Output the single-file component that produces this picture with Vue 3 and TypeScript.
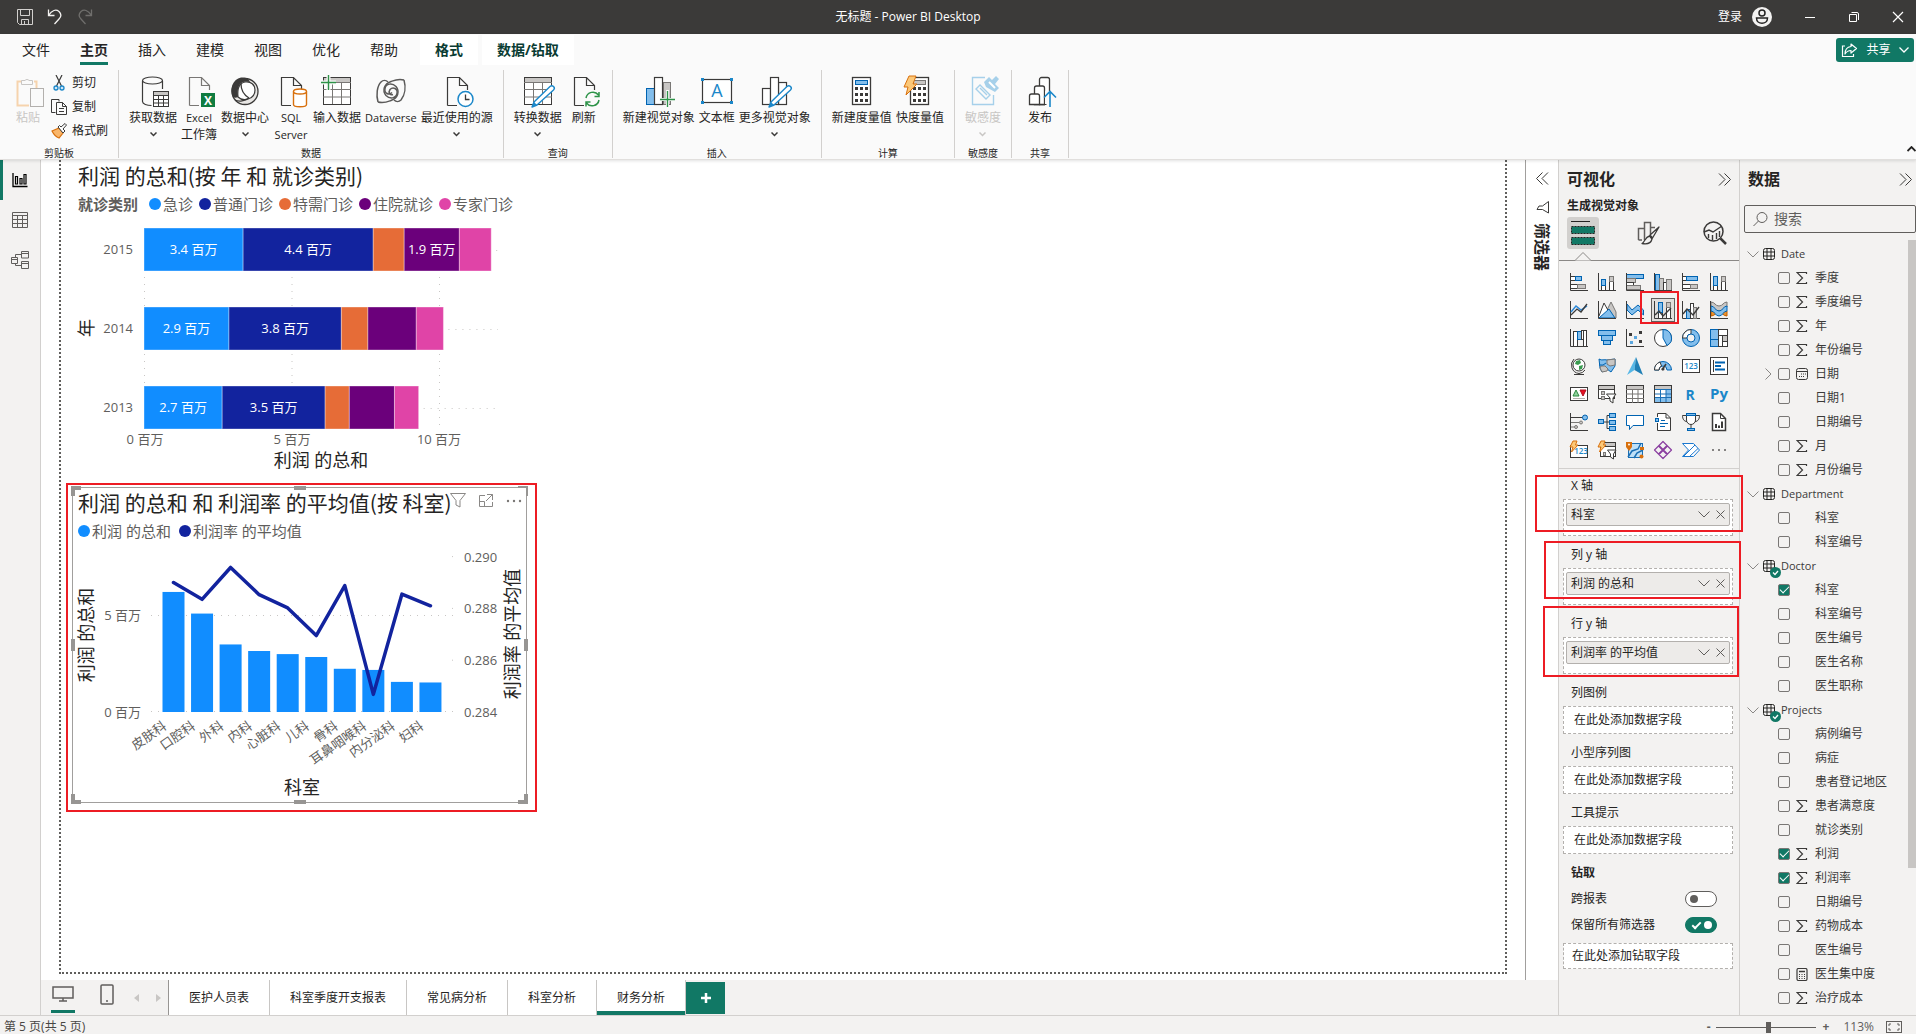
<script setup lang="ts">
import { computed, ref } from 'vue'

const D = '#3b3a39'
const B = '#0063b1'
const L = '#83beec'
const G = '#c8c6c4'
const axis = `<path d="M.5 0V17.5H18" fill="none" stroke="${D}"/>`
const box = (x: number, y: number, w: number, h: number, f: string, s: string) =>
  `<rect x="${x + 0.5}" y="${y + 0.5}" width="${w - 1}" height="${h - 1}" fill="${f}" stroke="${s}"/>`
const line = (d: string, s = D, w = 1, f = 'none') => `<path d="${d}" fill="${f}" stroke="${s}" stroke-width="${w}"/>`
const bolt = (s: string) => `<path d="${s}" fill="#fcc878" stroke="#d8700d" stroke-linejoin="round"/>`

/* Glyphs of the visual gallery, drawn on an 18 x 18 grid */
const visuals: { name: string; art: string }[] = [
  { name: '堆积条形图', art: axis + box(0, 3, 6, 5, '#fff', D) + box(5, 3, 7, 5, L, B) + box(0, 11, 8, 5, '#fff', D) + box(7, 11, 9, 5, G, '#797775') },
  { name: '堆积柱形图', art: axis + box(3, 12, 5, 6, '#fff', D) + box(3, 6, 5, 7, L, B) + box(11, 8, 5, 10, '#fff', D) + box(11, 3, 5, 6, G, '#797775') },
  { name: '簇状条形图', art: box(0, 1, 18, 5, L, B) + box(0, 5, 10, 5, G, '#797775') + box(0, 9, 8, 4, '#fff', D) + box(0, 12, 15, 5, G, '#797775') + axis },
  { name: '簇状柱形图', art: box(1, 1, 5, 17, L, B) + box(5, 5, 5, 13, G, '#797775') + box(9, 9, 4, 9, '#fff', D) + box(12, 6, 6, 12, G, '#797775') + axis },
  { name: '百分比堆积条形图', art: axis + box(0, 3, 5, 5, '#fff', D) + box(4, 3, 12, 5, L, B) + box(0, 11, 9, 5, '#fff', D) + box(8, 11, 8, 5, G, '#797775') },
  { name: '百分比堆积柱形图', art: axis + box(3, 12, 5, 6, '#fff', D) + box(3, 3, 5, 10, L, B) + box(11, 8, 5, 10, '#fff', D) + box(11, 3, 5, 6, G, '#797775') },
  { name: '折线图', art: axis + line('M1 11L6 5L11 9L17 5', '#2b88d8', 1.5) + line('M1 14L7 8L11 11L17 3', D, 1.3) },
  { name: '分区图', art: `<path d="M5 17L13 1L18 11V17Z" fill="${G}" stroke="#797775"/><path d="M1 15L6 2L12 13" fill="#fff" stroke="${D}"/><path d="M1 17L11 8L17 17Z" fill="${L}" stroke="${B}"/>` + axis },
  { name: '堆积面积图', art: `<path d="M1 3L6 9L12 4L17.500 9V14L12 9L6 14L1 9Z" fill="${L}" stroke="${B}"/>` + axis },
  { name: '折线和堆积柱形图', art: axis + box(4, 1, 5, 17, '#fff', D) + box(4, 1, 5, 11, L, B) + box(12, 1, 5, 17, '#fff', D) + box(12, 1, 5, 6, G, '#797775') + line('M1 14L5 10L9 15L17 7', D, 1.4) },
  { name: '折线和簇状柱形图', art: axis + box(4, 8, 5, 10, L, B) + box(8, 2, 4, 16, '#fff', D) + box(11, 6, 4, 12, G, '#797775') + line('M1 13L5 8L11 14L17 6', D, 1.4) },
  { name: '功能区图', art: `<path d="M1 15c4 0 5-4 8-4s4 4 8 4v-5c-4 0-5-3-8-3S5 10 1 10z" fill="#e8912d" stroke="#c05c00"/><path d="M1 1c4 0 4 4 8 4s4-4 8-4v5c-4 0-4 4-8 4S5 6 1 6z" fill="${G}" stroke="#797775"/><path d="M1 5c4 0 4 5 8 5s4-5 8-5v5c-4 0-4 5-8 5s-4-5-8-5z" fill="${L}" stroke="${B}"/>` + axis },
  { name: '瀑布图', art: axis + box(3, 2, 5, 16, '#fff', D) + box(7, 2, 5, 9, L, B) + box(11, 1, 3, 10, '#fff', D) + box(13, 1, 4, 17, '#fff', D) },
  { name: '漏斗图', art: box(0, 1, 18, 6, L, B) + box(3, 6, 12, 6, L, B) + box(5, 11, 8, 5, L, B) },
  { name: '散点图', art: axis + `<rect x="3" y="4" width="3" height="3" fill="${D}"/><rect x="8" y="7" width="3" height="3" fill="#5ba7e0"/><rect x="13" y="2" width="3" height="3" fill="${D}"/><rect x="4" y="12" width="3" height="3" fill="#5ba7e0"/><rect x="13" y="11" width="3" height="3" fill="${D}"/>` },
  { name: '饼图', art: `<circle cx="9" cy="9" r="8.500" fill="#fff" stroke="${D}"/><path d="M9 .5A8.500 8.500 0 0 1 13 16.500L9 9Z" fill="${L}" stroke="${B}"/>` },
  { name: '环形图', art: `<circle cx="9" cy="9" r="8.500" fill="${L}" stroke="${B}"/><path d="M9 .5A8.500 8.500 0 0 0 .5 9H5A4 4 0 0 1 9 5Z" fill="#fff" stroke="${D}"/><circle cx="9" cy="9" r="4" fill="#f3f2f1" stroke="${B}"/>` },
  { name: '树状图', art: box(0, 0, 9, 11, L, B) + box(0, 10, 9, 8, L, B) + box(8, 0, 10, 7, '#fff', D) + box(8, 6, 5, 12, '#fff', D) + box(12, 6, 6, 7, G, D) + box(12, 12, 6, 6, '#fff', D) },
  { name: '地图', art: `<circle cx="9" cy="8" r="6" fill="#fff" stroke="${D}"/><path d="M6 4l4-1 1 3-3 2-3-1zM9 9l4-1-1 4-3 1z" fill="#3a9b50"/><path d="M4 2A8.500 8.500 0 0 0 9 16.500A8 8 0 0 0 15 13M9 16V17.500M4 17.500H14" fill="none" stroke="${D}"/>` },
  { name: '着色地图', art: `<path d="M1 2c3 2 5 0 8 1l8-1v7l-4 6-4-3-5 3-2-4z" fill="${L}" stroke="${B}"/><path d="M9 3l8-1v6l-5 1-3-2z" fill="${G}" stroke="#797775"/><path d="M3 9h4l3 3-1 2-5 1-2-4z" fill="${G}" stroke="#797775"/><path d="M1 8h4l3-2" fill="none" stroke="${B}"/>` },
  { name: 'Azure 地图', art: `<path d="M10 0L1 18L8.500 13Z" fill="#56b7e6"/><path d="M10 0L17 18L8.500 13Z" fill="#1f7fb5"/>` },
  { name: '仪表', art: `<path d="M.5 13A8.500 8.500 0 0 1 17.500 13H13A4 4 0 0 0 5 13Z" fill="${L}" stroke="${B}"/><path d="M.5 13A8.500 8.500 0 0 1 6 5L7.500 9A4 4 0 0 0 5 13Z" fill="#fff" stroke="${D}"/><path d="M8 13L12 7" stroke="${D}" stroke-width="1.500"/><circle cx="9" cy="12" r="1.500" fill="${D}"/>` },
  { name: '卡片图', art: box(0, 2, 18, 14, '#fff', D) + `<text x="9" y="12" text-anchor="middle" font-size="8" font-family="Open Sans" fill="#1b87c9" font-weight="600">123</text>` },
  { name: '多行卡', art: box(0, 0, 18, 18, '#fff', D) + line('M3.500 3V15') + line('M5 5.500H15M5 12.500H15', B, 2) + line('M5 9H11', B, 2) },
  { name: 'KPI', art: box(0, 2, 18, 14, '#fff', D) + '<path d="M3 11L6 5L9 11Z" fill="#8fd19e" stroke="#2b8a3e"/><path d="M10 5H16L13 11Z" fill="#e81123" stroke="#b00d1c"/><path d="M3 13.500H15" stroke="#b3b0ad"/>' },
  { name: '切片器', art: box(0, 0, 17, 14, '#fff', D) + `<rect x="1" y="1" width="15" height="3" fill="${G}"/>` + line('M0 4.500H17') + box(3, 6, 4, 4, G, '#797775') + box(3, 11, 4, 4, G, '#797775') + `<path d="M8.500 9H18L15 13V18L12 16V13Z" fill="#fff" stroke="${D}"/>` },
  { name: '表', art: box(0, 0, 18, 18, '#fff', D) + `<rect x="1" y="1" width="16" height="3" fill="${G}"/>` + line('M0 4.500H18M0 9H18M0 13.500H18M6.500 4V18M12 4V18', '#797775') },
  { name: '矩阵', art: box(0, 0, 18, 18, '#fff', D) + `<rect x="1" y="1" width="16" height="3" fill="${G}"/><rect x="12" y="5" width="5" height="12" fill="${L}"/><rect x="1" y="12" width="16" height="5" fill="${L}"/>` + line('M0 4.500H18M0 9H18M0 12.500H18M6.500 4V18M12 4V18', '#1a6fb5') + line('M.5 .5H17.500V17.500H.5Z') },
  { name: 'R 脚本', art: '<text x="8" y="15" text-anchor="middle" font-size="14" font-family="Open Sans" fill="#1b87c9" font-weight="700">R</text>' },
  { name: 'Python', art: '<text x="9" y="14" text-anchor="middle" font-size="15" font-family="Open Sans" fill="#1b87c9" font-weight="700">Py</text>' },
  { name: '关键影响者', art: line('M.5 0V17.500H18') + line('M1 4.500H13', D) + line('M1 9.500H9M1 14H4', '#797775') + `<circle cx="15" cy="4.500" r="2.500" fill="${L}" stroke="${B}"/><circle cx="11" cy="9.500" r="1.500" fill="${G}" stroke="#797775"/><circle cx="6" cy="14" r="1.500" fill="${G}" stroke="#797775"/>` },
  { name: '分解树', art: line('M6 9H12M9 2.500V15.500M9 2.500H12M9 15.500H12') + box(0, 6, 6, 5, L, B) + box(11, 0, 7, 5, L, B) + box(11, 7, 7, 5, L, B) + box(11, 13, 7, 5, L, B) },
  { name: '问答', art: `<path d="M.5 2.500H17.500V12.500H7L3.500 16.500V12.500H.5Z" fill="#fff" stroke="${B}"/>` },
  { name: '智能叙述', art: `<path d="M3.500 4V.5H12L16.500 5V17.500H3.500V10" fill="#fff" stroke="${D}"/><path d="M12 .5V5H16.500" fill="none" stroke="${D}"/>` + box(1, 5, 4, 4, L, B) + line('M7 7.500H11M6 10.500H14M6 13.500H11', B) },
  { name: '指标', art: `<path d="M4.500 1H13.500V7A4.500 4.500 0 0 1 4.500 7Z" fill="#fff" stroke="${D}"/><path d="M4.500 2.500H.5C.5 6 2 8.500 5 8.500M13.500 2.500H17.500C17.500 6 16 8.500 13 8.500M9 11.500V15" fill="none" stroke="${D}"/>` + box(4, 0, 10, 3, L, B) + box(5, 15, 8, 3, L, B) },
  { name: '分页报表', art: `<path d="M2.500 .5H10.500L15.500 5.500V17.500H2.500Z" fill="#fff" stroke="${D}" stroke-width="1.500"/><path d="M10.500 .5V5.500H15.500" fill="none" stroke="${D}"/><path d="M6 15V11M9 15V12.500M12 15V8.500" stroke="${D}" stroke-width="2"/>` },
  { name: '新卡片', art: box(0, 4, 18, 13, '#fff', D) + `<text x="11" y="13" text-anchor="middle" font-size="8" font-family="Open Sans" fill="#1b87c9" font-weight="600">123</text>` + bolt('M3 0H7L5.500 4H8L1.500 11L3 6H0Z') },
  { name: '新切片器', art: box(2, 1, 16, 15, '#fff', D) + `<rect x="3" y="2" width="14" height="3" fill="${G}"/>` + line('M2 5.500H18') + box(5, 11, 3, 4, G, '#797775') + `<path d="M9.500 9H18L15.500 13V18L12.500 16V13Z" fill="#fff" stroke="${D}"/>` + bolt('M3 0H7L5.500 4H8L1.500 11L3 6H0Z') },
  { name: 'ArcGIS', art: box(2, 2, 15, 15, '#bfe0f7', '#1a6fb5') + line('M2 16L6 10L12 8L15 2M8 17L11 12L17 9', '#1a6fb5', 1.500) + `<path d="M0 1H6V6L3 10L0 6Z" fill="#d8700d"/><circle cx="3" cy="3.500" r="1" fill="#fff"/><rect x="14" y="6" width="4" height="3" fill="#d8700d"/><circle cx="15.500" cy="15.500" r="2" fill="#d8700d"/>` },
  { name: 'Power Apps', art: '<g fill="none" stroke="#8b3fa0" stroke-width="1.200" stroke-linejoin="round"><path d="M9 .5L13.500 5L9 9.500L4.500 5ZM13 4.500L17.500 9L13 13.500L8.500 9ZM9 8.500L13.500 13L9 17.500L4.500 13ZM5 4.500L9.500 9L5 13.500L.5 9Z"/></g>' },
  { name: 'Power Automate', art: '<path d="M.5 2.500H11.500L17.500 9L11.500 15.500H.5L6.500 9Z" fill="#fff" stroke="#1a78d0" stroke-linejoin="round"/><path d="M2 15L13 4M8 15L16 7.500" fill="none" stroke="#1a78d0"/>' },
  { name: '更多', art: '<circle cx="3" cy="9" r="1" fill="#605e5c"/><circle cx="9" cy="9" r="1" fill="#605e5c"/><circle cx="15" cy="9" r="1" fill="#605e5c"/>' },
]

/* Ribbon glyphs, drawn on a 32 x 32 grid */
const doc = `<path d="M6.500 29.500V1.500H18.500L26.500 9.500V14M18.500 1.500V9.500H26.500M6.500 29.500H16" fill="none" stroke="${D}" stroke-width="1.200"/>`
const grid = (x: number) =>
  `<rect x="${x}.5" y="1.500" width="27" height="27" fill="#fff" stroke="${D}"/><rect x="${x + 1}" y="2" width="26" height="4" fill="${G}"/>` +
  line(`M${x} 6.500H${x + 28}M${x} 13.500H${x + 28}M${x} 21H${x + 28}M${x + 9}.5 6V28M${x + 18}.5 6V28`, '#797775')
const pencil = '<path d="M28 10.500a2 2 0 0 1 3.500 3.500L15 29L10 31L12 26Z" fill="#fff" stroke="#1b87c9" stroke-width="1.400" stroke-linejoin="round"/><path d="M12 26L15 29L10 31Z" fill="#1b87c9"/>'
const calc = (top: string, stroke: string) =>
  `<rect x="6.500" y="1.500" width="18" height="27" fill="#fff" stroke="${D}" stroke-width="1.300"/>${box(9, 4, 13, 5, top, stroke)}` +
  [12, 18, 24].map((y) => [9, 14, 19].map((x) => `<rect x="${x}" y="${y - 1}" width="3" height="3" fill="${D}"/>`).join('')).join('')

const art: Record<string, string> = {
  getData: `<path d="M5.500 5V25.500C5.500 28 10 29.500 14.500 29.500M25.500 5V13" fill="none" stroke="${D}" stroke-width="1.200"/><ellipse cx="15.500" cy="4.500" rx="10" ry="3.500" fill="none" stroke="${D}" stroke-width="1.200"/><rect x="16.500" y="15.500" width="15" height="15" fill="#fff" stroke="${D}"/><rect x="17" y="16" width="14" height="3" fill="${G}"/>` + line('M16 19.500H32M16 23.500H32M16 27H32M21.500 19V31M26.500 19V31'),
  excel: `<path d="M6.500 29.500V1.500H18.500L26.500 9.500V14M18.500 1.500V9.500H26.500M6.500 29.500H16" fill="none" stroke="#797775" stroke-width="1.200"/><rect x="18" y="17" width="14" height="14" fill="#107c41"/><text x="25" y="28.500" text-anchor="middle" font-size="12" font-family="Open Sans" font-weight="700" fill="#fff">X</text>`,
  hub: `<circle cx="16" cy="15.500" r="13" fill="#e8e6e4" stroke="${D}" stroke-width="1.300"/><path d="M9 21C8 12 11 7 16 6C22 5 26 9 26 14C26 19 23 22 19 23C15 24 11 23 9 21Z" fill="#fff" stroke="${D}" stroke-width="1.200"/><path d="M4 21C0 13 4 3 12 1.500C17 1 20 3 21 6C14 4 10 8 9 13C8 17 9 19 9 21C7 22 5 22 4 21Z" fill="${D}"/><path d="M12 8C12 14 15 19 20 22M6 24C10 26 16 25 20 22" fill="none" stroke="${D}" stroke-width="1.300"/>`,
  sql: doc + `<path d="M18.500 15.500V28.500C18.500 31.500 31.500 31.500 31.500 28.500V15.500" fill="#fff" stroke="#d8700d" stroke-width="1.400"/><ellipse cx="25" cy="15.500" rx="6.500" ry="2.500" fill="#fff" stroke="#d8700d" stroke-width="1.400"/>`,
  enter: grid(2) + '<path d="M7.500 0V14M0 6.500H15" stroke="#fafafa" stroke-width="4"/><path d="M7.500 -1V14M0 6.500H15" stroke="#2d9348" stroke-width="1.400"/>',
  dataverse: `<g fill="none" stroke="#5b5a59" stroke-width="1.500"><path d="M29 4c-6-1.500-9 0-13 1.500-7 2.500-9 9-5 14 4 4 10 3 11-2 1-5-4-7-7-4-2 3 0 6 3 5"/><path d="M3 26c6 1.500 9 0 13-1.500 7-2.500 9-9 5-14-4-4-10-3-11 2-1 5 4 7 7 4"/><path d="M3 26C1 19 2 10 6 6c2-2 5-2 7 0M29 4c2 7 1 15-3 20-2 2-5 2-7 0"/></g>`,
  recent: doc + '<circle cx="24.500" cy="23" r="7.500" fill="#fff" stroke="#1b87c9" stroke-width="1.500"/><path d="M24.500 18.500V23.500H28.500" fill="none" stroke="#3b3a39" stroke-width="1.300"/>',
  transform: grid(2) + pencil,
  refresh: doc + '<path d="M18 22a7 7 0 0 1 12.500-3M31 16v4.500h-4.500M31 24a7 7 0 0 1-12.500 3M18 30.500V26h4.500" fill="none" stroke="#2d9348" stroke-width="1.500"/>',
  newVisual: box(3, 12, 9, 17, L, B) + box(20, 6, 8, 23, G, '#797775') + `<rect x="11.500" y="1.500" width="8" height="27" fill="#fff" stroke="${D}" stroke-width="1.200"/><path d="M24.500 14V31M16 23.500H32" stroke="#fafafa" stroke-width="3"/><path d="M24.500 15V31M17 23.500H32" stroke="#2d9348" stroke-width="1.300"/>`,
  textBox: `<rect x="1.500" y="3.500" width="29" height="23" fill="#fff" stroke="${D}" stroke-width="1.200"/><g fill="#1b87c9"><rect x="0" y="2" width="3" height="3"/><rect x="29" y="2" width="3" height="3"/><rect x="0" y="25" width="3" height="3"/><rect x="29" y="25" width="3" height="3"/></g><text x="16" y="21" text-anchor="middle" font-size="18" font-family="Open Sans" fill="#1b87c9">A</text>`,
  moreVisual: `<g fill="#fff" stroke="${D}" stroke-width="1.200"><rect x="3.500" y="12.500" width="8" height="16"/><rect x="19.500" y="6.500" width="8" height="22"/><rect x="11.500" y="1.500" width="8" height="27"/></g>` + pencil,
  measure: calc(L, B),
  quick: calc(G, '#797775') + bolt('M5 0H12L9 8H13L2 19L4 11H0Z'),
  sensitivity: '<g fill="none" stroke="#a6d0ea" stroke-width="1.400"><path d="M18 1.500H5.500V28.500H26.500V19"/><path d="M9 13L13 9L23 19L19 23ZM13 12L20 19"/></g><path d="M17 6L22 1L25 4L29 0L32 3L28 8L32 12L28 16L19 11Z" fill="#a6d0ea"/><path d="M22 6L28 12" stroke="#fff" stroke-width="2"/>',
  publish: `<g fill="#fff" stroke="${D}" stroke-width="1.300"><path d="M15.500 28.500V3.500a2 2 0 0 1 2-2h6a2 2 0 0 1 2 2V28.500Z"/><path d="M10.500 28.500V12a2 2 0 0 1 2-2h6a2 2 0 0 1 2 2V28.500Z"/><path d="M5.500 28.500V20a2 2 0 0 1 2-2h6a2 2 0 0 1 2 2V28.500Z"/></g><path d="M21 15H32V32H21Z" fill="#fafafa"/><path d="M15.500 28.500H22.500" stroke="${D}"/><path d="M26 31V16M20 21.500L26 15.500L32 21.500" fill="none" stroke="#1b87c9" stroke-width="1.600"/>`,
}

interface Tool { id: string; text: string; second?: string; menu?: boolean; off?: boolean; latin?: boolean }
const groups: { label: string; tools: Tool[] }[] = [
  { label: '数据', tools: [
    { id: 'getData', text: '获取数据', menu: true },
    { id: 'excel', text: 'Excel', second: '工作簿', latin: true },
    { id: 'hub', text: '数据中心', menu: true },
    { id: 'sql', text: 'SQL', second: 'Server', latin: true },
    { id: 'enter', text: '输入数据' },
    { id: 'dataverse', text: 'Dataverse', latin: true },
    { id: 'recent', text: '最近使用的源', menu: true },
  ] },
  { label: '查询', tools: [{ id: 'transform', text: '转换数据', menu: true }, { id: 'refresh', text: '刷新' }] },
  { label: '插入', tools: [
    { id: 'newVisual', text: '新建视觉对象' },
    { id: 'textBox', text: '文本框' },
    { id: 'moreVisual', text: '更多视觉对象', menu: true },
  ] },
  { label: '计算', tools: [{ id: 'measure', text: '新建度量值' }, { id: 'quick', text: '快度量值' }] },
  { label: '敏感度', tools: [{ id: 'sensitivity', text: '敏感度', menu: true, off: true }] },
  { label: '共享', tools: [{ id: 'publish', text: '发布' }] },
]

const menus = ['文件', '主页', '插入', '建模', '视图', '优化', '帮助']
const contextMenus = ['格式', '数据/钻取']
const pages = ['医护人员表', '科室季度开支报表', '常见病分析', '科室分析', '财务分析']
const activePage = ref('财务分析')

/* Profit by year and visit type, in millions */
const types = [
  { name: '急诊', color: '#118dff' },
  { name: '普通门诊', color: '#12239e' },
  { name: '特需门诊', color: '#e66c37' },
  { name: '住院就诊', color: '#6b007b' },
  { name: '专家门诊', color: '#e044a7' },
]
const years = [
  { year: '2015', values: [3.36, 4.41, 1.05, 1.87, 1.08], labels: ['3.4', '4.4', '', '1.9', ''] },
  { year: '2014', values: [2.88, 3.81, 0.9, 1.64, 0.92], labels: ['2.9', '3.8', '', '', ''] },
  { year: '2013', values: [2.65, 3.49, 0.82, 1.53, 0.82], labels: ['2.7', '3.5', '', '', ''] },
]
const perMillion = 29.5
const plotLeft = 72
const yearRows = computed(() =>
  years.map((row, r) => {
    let x = plotLeft
    return {
      year: row.year,
      top: 14 + r * 79,
      end: plotLeft + row.values.reduce((a, b) => a + b, 0) * perMillion,
      segments: row.values.map((value, i) => {
        const width = value * perMillion
        const segment = { x, width, color: types[i].color, label: row.labels[i] }
        x += width
        return segment
      }),
    }
  }),
)

/* Profit (millions) and average margin by department */
const departments = [
  { name: '皮肤科', profit: 6.22, margin: 0.289 },
  { name: '口腔科', profit: 5.1, margin: 0.28835 },
  { name: '外科', profit: 3.5, margin: 0.28958 },
  { name: '内科', profit: 3.16, margin: 0.28853 },
  { name: '心脏科', profit: 3, margin: 0.28802 },
  { name: '儿科', profit: 2.85, margin: 0.28695 },
  { name: '骨科', profit: 2.24, margin: 0.28888 },
  { name: '耳鼻咽喉科', profit: 2.18, margin: 0.28468 },
  { name: '内分泌科', profit: 1.56, margin: 0.28855 },
  { name: '妇科', profit: 1.53, margin: 0.2881 },
]
const base = 171
const columns = computed(() =>
  departments.map((d, i) => ({
    name: d.name,
    center: 100.5 + i * 28.55,
    height: d.profit * 19.3,
    lineY: base - (d.margin - 0.284) * 25900,
  })),
)
const marginPath = computed(() => columns.value.map((c) => `${c.center},${c.lineY}`).join(' '))
const marginTicks = ['0.284', '0.286', '0.288', '0.290']

const wells = [
  { label: 'X 轴', field: '科室', mark: 'a' },
  { label: '列 y 轴', field: '利润 的总和', mark: 'b' },
  { label: '行 y 轴', field: '利润率 的平均值', mark: 'c' },
  { label: '列图例' },
  { label: '小型序列图' },
  { label: '工具提示' },
]

interface Field { name: string; icon?: 'sum' | 'date' | 'calc'; on?: boolean; expand?: boolean }
const tables: { name: string; used?: boolean; fields: Field[] }[] = [
  { name: 'Date', fields: [
    { name: '季度', icon: 'sum' }, { name: '季度编号', icon: 'sum' }, { name: '年', icon: 'sum' },
    { name: '年份编号', icon: 'sum' }, { name: '日期', icon: 'date', expand: true }, { name: '日期1' },
    { name: '日期编号' }, { name: '月', icon: 'sum' }, { name: '月份编号', icon: 'sum' },
  ] },
  { name: 'Department', fields: [{ name: '科室' }, { name: '科室编号' }] },
  { name: 'Doctor', used: true, fields: [
    { name: '科室', on: true }, { name: '科室编号' }, { name: '医生编号' }, { name: '医生名称' }, { name: '医生职称' },
  ] },
  { name: 'Projects', used: true, fields: [
    { name: '病例编号' }, { name: '病症' }, { name: '患者登记地区' }, { name: '患者满意度', icon: 'sum' },
    { name: '就诊类别' }, { name: '利润', icon: 'sum', on: true }, { name: '利润率', icon: 'sum', on: true },
    { name: '日期编号' }, { name: '药物成本', icon: 'sum' }, { name: '医生编号' },
    { name: '医生集中度', icon: 'calc' }, { name: '治疗成本', icon: 'sum' },
  ] },
]
const fieldArt = {
  sum: line('M10.500 2V.5H1L6.500 6L1 11.500H10.500V10', D, 1.2),
  date: `<rect x=".5" y=".5" width="11" height="11" rx="2" fill="none" stroke="${D}"/><path d="M1 3.500H11" stroke="${D}"/><path d="M5 6H6M7 6H8M9 6H10M3 8.500H4M5 8.500H6M7 8.500H8" stroke="${D}"/>`,
  calc: `<rect x="1" y=".5" width="10" height="12" rx="1.500" fill="none" stroke="${D}" stroke-width="1.200"/><path d="M3 3.500H9" stroke="${D}" stroke-width="1.500"/><path d="M3 6.500H4M5.500 6.500H6.500M8 6.500H9M3 8.500H4M5.500 8.500H6.500M8 8.500H9M3 10.500H4M5.500 10.500H6.500M8 10.500H9" stroke="${D}"/>`,
}
const zoom = ref(53)
</script>

<template>
  <div class="app">
    <header class="titlebar">
      <div class="quick">
        <button aria-label="保存"><svg width="16" height="16"><path d="M.5.5H15.500V15.500H2.500L.5 13.500ZM3.500 .5V6.500H12.500V.5M4.500 15V10.500H11.500V15M7.500 12V15" fill="none" stroke="#d2d0ce" /></svg></button>
        <button aria-label="撤消"><svg width="16" height="16"><path d="M1.500 .5V6.500H7.500M1.500 6.500C5 1 9 0 12 2.500C15 5.500 14 8 12 10L7.500 15" fill="none" stroke="#f3f2f1" stroke-width="1.300" /></svg></button>
        <button aria-label="恢复"><svg width="16" height="16"><path d="M14.500 .5V6.500H8.500M14.500 6.500C11 1 7 0 4 2.500C1 5.500 2 8 4 10L8.500 15" fill="none" stroke="#6f6e6c" stroke-width="1.300" /></svg></button>
      </div>
      <h1 class="app-name">无标题 - Power BI Desktop</h1>
      <div class="account">
        <button class="sign-in">登录
          <svg width="20" height="20"><circle cx="10" cy="10" r="10" fill="#f3f2f1" /><circle cx="10" cy="6" r="3" fill="none" stroke="#252423" stroke-width="1.500" /><path d="M4.500 11H15.500C15.500 18 4.500 18 4.500 11Z" fill="none" stroke="#252423" stroke-width="1.500" /></svg>
        </button>
        <button aria-label="最小化"><svg width="12" height="12"><path d="M1 6.500H11" stroke="#fff" /></svg></button>
        <button aria-label="还原"><svg width="12" height="12"><path d="M1.500 3.500H8.500V10.500H1.500ZM3.500 1.500H9A1.500 1.500 0 0 1 10.500 3V9" fill="none" stroke="#fff" /></svg></button>
        <button aria-label="关闭"><svg width="12" height="12"><path d="M1 1L11 11M11 1L1 11" stroke="#fff" stroke-width="1.200" /></svg></button>
      </div>
    </header>

    <section class="ribbon">
      <nav class="menus">
        <button v-for="m in menus" :key="m" :class="{ current: m === '主页' }">{{ m }}</button>
        <button v-for="m in contextMenus" :key="m" class="context">{{ m }}</button>
        <button class="share">
          <svg width="17" height="15"><path d="M4 3H1.500V13.500H12.500V11" fill="none" stroke="#fff" stroke-width="1.200" /><path d="M10 1L15.500 5.500L10 10V7.500C7 7.500 5.500 8.500 4 11C4 7 6 4 10 3.500Z" fill="none" stroke="#fff" stroke-width="1.200" stroke-linejoin="round" /></svg>
          共享
          <svg width="10" height="6"><path d="M.5.5L5 5L9.500 .5" fill="none" stroke="#fff" stroke-width="1.300" /></svg>
        </button>
      </nav>
      <div class="groups">
        <div class="group clipboard">
          <div class="tools">
            <button class="tool off">
              <svg width="32" height="32"><path d="M11 5.500H5.500V29.500H17M22 5.500H24.500V13" fill="none" stroke="#f6d3ad" stroke-width="2" /><path d="M9.500 8.500V4.500H13A2.500 2.500 0 0 1 17 4.500H20.500V8.500Z" fill="#fafafa" stroke="#c8c6c4" /><rect x="18.500" y="12.500" width="13" height="18" fill="#fafafa" stroke="#b3b0ad" /></svg>
              <span>粘贴</span>
            </button>
            <div class="stack">
              <button><svg width="16" height="16"><path d="M5 0L10.500 11M11 0L5.500 11" stroke="#3b3a39" stroke-width="1.200" /><circle cx="5" cy="13" r="2" fill="#cfe6f7" stroke="#1b87c9" stroke-width="1.300" /><circle cx="11" cy="13" r="2" fill="#cfe6f7" stroke="#1b87c9" stroke-width="1.300" /></svg>剪切</button>
              <button><svg width="16" height="16"><path d="M4.500 13.500H.5V.5H8V2.500" fill="none" stroke="#3b3a39" /><path d="M5.500 3.500H11.500L15.500 7.500V15.500H5.500ZM11.500 3.500V7.500H15.500M8 9.500H13M8 12.500H13" fill="none" stroke="#3b3a39" /></svg>复制</button>
              <button><svg width="16" height="16"><path d="M1 8L8 5L12 10L8 15C5 14 3 12 1 8Z" fill="#f9b66b" stroke="#d8700d" stroke-width="1.200" /><path d="M7 4L12 10L14 8L12 6L15.500 2L14 .5L10 4L8.500 2.500Z" fill="#fff" stroke="#3b3a39" /></svg>格式刷</button>
            </div>
          </div>
          <p>剪贴板</p>
        </div>
        <div v-for="g in groups" :key="g.label" class="group">
          <div class="tools">
            <button v-for="t in g.tools" :key="t.id" class="tool" :class="{ off: t.off }" :disabled="t.off">
              <svg width="32" height="32" overflow="visible" v-html="art[t.id]"></svg>
              <span :class="{ latin: t.latin }">{{ t.text }}</span>
              <span v-if="t.second" :class="{ latin: t.second === 'Server' }">{{ t.second }}</span>
              <svg v-if="t.menu" class="drop" width="7" height="5"><path d="M.5 .5L3.500 3.500L6.500 .5" fill="none" stroke="currentColor" stroke-width="1.500" /></svg>
            </button>
          </div>
          <p>{{ g.label }}</p>
        </div>
        <button class="collapse" aria-label="折叠功能区"><svg width="9" height="6"><path d="M.5 5L4.500 1L8.500 5" fill="none" stroke="#252423" stroke-width="1.800" /></svg></button>
      </div>
    </section>

    <main class="work">
      <nav class="rail">
        <button class="on" aria-label="报表视图"><svg width="16" height="16"><path d="M1 1V14.500H15.500" fill="none" stroke="#000" stroke-width="1.300" /><path d="M3.500 4.500H5.500V12H3.500ZM8 6.500H10V12H8ZM12 2.500H14V12H12Z" fill="none" stroke="#000" stroke-width="1.200" /></svg></button>
        <button aria-label="数据视图"><svg width="16" height="16"><path d="M.5.5H15.500V15.500H.5ZM.5 3.500H15.500M.5 7.500H15.500M.5 11.500H15.500M5.500 3.500V15.500M10.500 3.500V15.500" fill="none" stroke="#605e5c" /></svg></button>
        <button aria-label="模型视图"><svg width="18" height="18"><path d="M.5 6.500H6.500V12.500H.5ZM10.500 .5H17.500V7H10.500ZM10.500 10.500H17.500V17.500H10.500ZM.5 8.500H6.500M10.500 2.500H17.500M10.500 12.500H17.500M4.500 6V3.500H10.500M4.500 13V14.500H10.500" fill="none" stroke="#605e5c" /></svg></button>
      </nav>

      <div class="center">
        <div class="stage">
          <div class="canvas">
            <div class="page">
              <article class="visual first">
                <h2>利润 的总和(按 年 和 就诊类别)</h2>
                <ul class="legend">
                  <li class="caption">就诊类别</li>
                  <li v-for="t in types" :key="t.name"><svg width="12" height="12"><circle cx="6" cy="6" r="6" :fill="t.color" /></svg>{{ t.name }}</li>
                </ul>
                <svg class="plot" width="454" height="262">
                  <g stroke="#c8c6c4" stroke-dasharray="1 6">
                    <line v-for="n in 3" :key="n" :x1="72.5 + (n - 1) * 147.500" :x2="72.5 + (n - 1) * 147.500" y1="14" y2="216" />
                    <line v-for="r in yearRows" :key="r.year" :x1="r.end + 5" x2="426" :y1="r.top + 22.500" :y2="r.top + 22.500" />
                  </g>
                  <g v-for="r in yearRows" :key="r.year">
                    <text class="tick" x="61" :y="r.top + 26" text-anchor="end">{{ r.year }}</text>
                    <template v-for="(s, i) in r.segments" :key="i">
                      <rect :x="s.x" :y="r.top" :width="s.width" height="43" :fill="s.color" stroke="#fff" stroke-opacity=".35" />
                      <text v-if="s.label" class="value" :x="s.x + s.width / 2" :y="r.top + 26" text-anchor="middle">{{ s.label }} 百万</text>
                    </template>
                  </g>
                  <g class="tick" text-anchor="middle">
                    <text x="73" y="230">0 百万</text>
                    <text x="220" y="230">5 百万</text>
                    <text x="367" y="230">10 百万</text>
                  </g>
                  <text class="axis-title" x="249" y="253" text-anchor="middle">利润 的总和</text>
                  <text class="axis-title" text-anchor="middle" transform="translate(21 114) rotate(-90)">年</text>
                </svg>
              </article>

              <article class="visual second">
                <h2>利润 的总和 和 利润率 的平均值(按 科室)</h2>
                <div class="visual-tools">
                  <button aria-label="筛选器"><svg width="16" height="15"><path d="M.5.5H15.500L10 7.500V14L6 12V7.500Z" fill="none" stroke="#8a8886" /></svg></button>
                  <button aria-label="焦点模式"><svg width="16" height="15"><path d="M7 2.500H1.500V13.500H14.500V9M1.500 8.500H6.500V13.500M9 1.500H14.500V7M14.500 1.500L8 8" fill="none" stroke="#8a8886" /></svg></button>
                  <button aria-label="更多选项"><svg width="16" height="15"><g fill="#797775"><circle cx="2" cy="8" r="1.200" /><circle cx="8" cy="8" r="1.200" /><circle cx="14" cy="8" r="1.200" /></g></svg></button>
                </div>
                <ul class="legend">
                  <li><svg width="12" height="12"><circle cx="6" cy="6" r="6" fill="#118dff" /></svg>利润 的总和</li>
                  <li><svg width="12" height="12"><circle cx="6" cy="6" r="6" fill="#12239e" /></svg>利润率 的平均值</li>
                </ul>
                <svg class="plot" width="453" height="258">
                  <g stroke="#c8c6c4" stroke-dasharray="1 6">
                    <line x1="78" x2="380" y1="74.500" y2="74.500" />
                    <line x1="78" x2="380" y1="170.500" y2="170.500" />
                    <line v-for="n in 3" :key="n" x1="379" x2="380" :y1="171 - n * 51.800" :y2="171 - n * 51.800" />
                  </g>
                  <rect v-for="c in columns" :key="c.name" :x="c.center - 11" :y="base - c.height" width="22" :height="c.height" fill="#118dff" />
                  <polyline :points="marginPath" fill="none" stroke="#12239e" stroke-width="3.500" stroke-linejoin="round" stroke-linecap="round" />
                  <g class="tick">
                    <text x="68" y="79" text-anchor="end">5 百万</text>
                    <text x="68" y="176" text-anchor="end">0 百万</text>
                    <text v-for="(m, i) in marginTicks" :key="m" x="391" :y="176 - i * 51.800">{{ m }}</text>
                    <text v-for="c in columns" :key="c.name" text-anchor="end" :transform="`translate(${c.center - 6} 187) rotate(-35)`">{{ c.name }}</text>
                  </g>
                  <text class="axis-title" x="229" y="253" text-anchor="middle">科室</text>
                  <text class="axis-title" text-anchor="middle" transform="translate(20 94) rotate(-90)">利润 的总和</text>
                  <text class="axis-title" text-anchor="middle" transform="translate(446 93) rotate(-90)">利润率 的平均值</text>
                </svg>
                <i class="grip nw"></i><i class="grip ne"></i><i class="grip sw"></i><i class="grip se"></i>
                <i class="grip n"></i><i class="grip s"></i><i class="grip w"></i><i class="grip e"></i>
                <i class="mark"></i>
              </article>
            </div>
          </div>
          <aside class="filters">
            <button aria-label="展开筛选器"><svg width="13" height="13"><path d="M6.500 .5L.5 6.500L6.500 12.500M12 .5L6 6.500L12 12.500" fill="none" stroke="#3b3a39" /></svg></button>
            <svg width="13" height="13"><path d="M12.500 .5V12L6.500 8.500H1L3 5H6.500Z" fill="none" stroke="#3b3a39" /></svg>
            <h2>筛选器</h2>
          </aside>
        </div>
        <footer class="pages">
          <button class="device on" aria-label="桌面布局"><svg width="22" height="16"><path d="M1 1H21V12H1ZM11 12V15M7 15H15" fill="none" stroke="#605e5c" stroke-width="1.500" /></svg></button>
          <button class="device" aria-label="手机布局"><svg width="14" height="21"><rect x="1" y="1" width="12" height="19" rx="1" fill="none" stroke="#605e5c" stroke-width="1.500" /><circle cx="7" cy="17" r="1" fill="#605e5c" /></svg></button>
          <div class="steps">
            <button aria-label="上一页"><svg width="5" height="8"><path d="M5 0V8L0 4Z" fill="#c8c6c4" /></svg></button>
            <button aria-label="下一页"><svg width="5" height="8"><path d="M0 0V8L5 4Z" fill="#c8c6c4" /></svg></button>
          </div>
          <div class="page-tabs">
            <button v-for="p in pages" :key="p" :class="{ on: p === activePage }" @click="activePage = p">{{ p }}</button>
          </div>
          <button class="add" aria-label="新建页"><svg width="12" height="12"><path d="M6 1V11M1 6H11" stroke="#fff" stroke-width="2.500" /></svg></button>
        </footer>
      </div>

      <aside class="pane build">
        <header>
          <h2>可视化</h2>
          <button aria-label="折叠"><svg width="13" height="13"><path d="M1 .5L7 6.500L1 12.500M6.500 .5L12.500 6.500L6.500 12.500" fill="none" stroke="#3b3a39" /></svg></button>
        </header>
        <h3>生成视觉对象</h3>
        <div class="modes">
          <button class="on" aria-label="生成视觉对象"><svg width="24" height="24"><path d="M0 .5H19" stroke="#252423" /><rect x=".5" y="5.500" width="23" height="7" fill="#117865" stroke="#252423" stroke-dasharray="2 1" /><rect x=".5" y="16.500" width="23" height="7" fill="#117865" stroke="#252423" stroke-dasharray="2 1" /></svg></button>
          <button aria-label="设置格式"><svg width="24" height="24"><path d="M1.500 19V7.500H7.500M7.500 19V1.500H13.500V13M13.500 6.500H18M1.500 19H5" fill="none" stroke="#605e5c" stroke-width="1.500" /><path d="M22 6L13 14L15.500 17ZM12.500 15L15 18C14 22 10 23.500 5 22.500C8 21 8 16 12.500 15Z" fill="#f3f2f1" stroke="#3b3a39" stroke-width="1.300" stroke-linejoin="round" /></svg></button>
          <button aria-label="分析"><svg width="24" height="24"><circle cx="10.500" cy="10.500" r="9.500" fill="none" stroke="#3b3a39" stroke-width="1.500" /><path d="M1 11L6 9L10 11L19 5M5.500 17V13M9.500 19V14M13.500 18V12M16.500 16V10" fill="none" stroke="#3b3a39" stroke-width="1.400" /><path d="M17.500 17.500L23 23" stroke="#3b3a39" stroke-width="2.500" /></svg></button>
        </div>
        <svg class="notch" width="16" height="9"><path d="M0 8.500L8 .5L16 8.500" fill="#f3f2f1" stroke="#8a8886" /></svg>
        <div class="gallery">
          <button v-for="(v, i) in visuals" :key="v.name" :aria-label="v.name" :class="{ on: i === 9 }">
            <svg width="18" height="18" overflow="visible" v-html="v.art"></svg>
          </button>
        </div>
        <div class="wells">
          <section v-for="w in wells" :key="w.label" class="well">
            <h4>{{ w.label }}</h4>
            <div v-if="w.field" class="slot filled">
              <div class="pill">
                <span>{{ w.field }}</span>
                <button aria-label="字段菜单"><svg width="12" height="7"><path d="M.5.5L6 6L11.500 .5" fill="none" stroke="#605e5c" /></svg></button>
                <button aria-label="删除字段"><svg width="9" height="9"><path d="M.5.5L8.500 8.500M8.500 .5L.5 8.500" stroke="#605e5c" /></svg></button>
              </div>
            </div>
            <div v-else class="slot">在此处添加数据字段</div>
            <i v-if="w.mark" class="mark" :class="w.mark"></i>
          </section>
          <section class="drill">
            <h4>钻取</h4>
            <label>跨报表<input type="checkbox" role="switch"></label>
            <label>保留所有筛选器<input type="checkbox" role="switch" checked></label>
            <div class="slot">在此处添加钻取字段</div>
          </section>
        </div>
      </aside>

      <aside class="pane data">
        <header>
          <h2>数据</h2>
          <button aria-label="折叠"><svg width="13" height="13"><path d="M1 .5L7 6.500L1 12.500M6.500 .5L12.500 6.500L6.500 12.500" fill="none" stroke="#3b3a39" /></svg></button>
        </header>
        <label class="search">
          <svg width="15" height="15"><circle cx="9" cy="5.500" r="5" fill="none" stroke="#605e5c" /><path d="M5.500 9L.5 14" stroke="#605e5c" /></svg>
          <input type="text" placeholder="搜索" aria-label="搜索">
        </label>
        <div class="tree">
          <ul>
            <template v-for="t in tables" :key="t.name">
              <li class="table-row">
                <svg width="12" height="7"><path d="M.5.5L6 6L11.500 .5" fill="none" stroke="#8a8886" /></svg>
                <span class="table-icon">
                  <svg width="12" height="12"><rect x=".5" y=".5" width="11" height="11" rx="2" fill="none" stroke="#252423" /><path d="M.5 4H11.500M.5 8H11.500M4 .5V11.500M8 .5V11.500" stroke="#252423" /></svg>
                  <svg v-if="t.used" class="used" width="11" height="11"><circle cx="5.500" cy="5.500" r="5.500" fill="#117865" /><path d="M3 5.500L5 7.500L8 4" fill="none" stroke="#fff" stroke-width="1.300" /></svg>
                </span>
                {{ t.name }}
              </li>
              <li v-for="f in t.fields" :key="f.name" class="field-row">
                <svg class="expander" width="7" height="12"><path v-if="f.expand" d="M.5.5L6 6L.5 11.500" fill="none" stroke="#8a8886" /></svg>
                <label>
                  <input type="checkbox" :checked="f.on">
                  <svg width="13" height="13" v-html="f.icon ? fieldArt[f.icon] : ''"></svg>
                  {{ f.name }}
                </label>
              </li>
            </template>
          </ul>
          <i class="thumb"></i>
        </div>
      </aside>
    </main>

    <footer class="status">
      <span>第 5 页(共 5 页)</span>
      <div class="zoom">
        <b>-</b>
        <input v-model="zoom" type="range" min="0" max="100" aria-label="缩放">
        <b>+</b>
        <span>113%</span>
        <button aria-label="适应页面"><svg width="16" height="12"><rect x=".5" y=".5" width="15" height="11" fill="none" stroke="#605e5c" /><path d="M3 5V3H5M11 3H13V5M13 7V9H11M5 9H3V7" fill="none" stroke="#605e5c" /></svg></button>
      </div>
    </footer>
  </div>
</template>

<style>
html,
body {
  margin: 0;
  overflow: hidden;
}
</style>

<style scoped>
.app {
  display: flex;
  flex-direction: column;
  height: 100vh;
  background: #f3f2f1;
  color: #252423;
  font: 12px/16px "Open Sans", "Noto Sans CJK SC", sans-serif;
}
.app * {
  box-sizing: border-box;
}
button {
  display: flex;
  align-items: center;
  justify-content: center;
  padding: 0;
  border: 0;
  background: none;
  color: inherit;
  font: inherit;
  white-space: nowrap;
}
h1, h2, h3, h4, p, ul {
  margin: 0;
  padding: 0;
  font-size: 12px;
  font-weight: 400;
  list-style: none;
}
svg {
  flex: none;
}

/* Title bar */
.titlebar {
  display: flex;
  align-items: center;
  height: 34px;
  flex: none;
  background: #3b3a39;
  color: #fff;
}
.quick {
  display: flex;
  gap: 14px;
  width: 98px;
  padding-left: 17px;
}
.app-name {
  flex: 1;
  text-align: center;
}
.account {
  display: flex;
  gap: 32px;
  padding-right: 12px;
}
.sign-in {
  gap: 10px;
}

/* Ribbon */
.ribbon {
  position: relative;
  z-index: 3;
  flex: none;
  height: 126px;
  background: #fafafa;
  border-bottom: 1px solid #e1dfdd;
  box-shadow: 0 1px 3px rgba(0, 0, 0, 0.12);
}
.menus {
  display: flex;
  height: 32px;
  padding-left: 7px;
  font-size: 14px;
}
.menus > button {
  position: relative;
  padding: 0 15px;
}
.menus .current {
  font-weight: 700;
}
.menus .current::after {
  content: "";
  position: absolute;
  left: 15px;
  right: 15px;
  bottom: 1px;
  height: 3px;
  background: #117865;
}
.menus .context {
  margin: 1px 0 1px 4px;
  background: #fff;
  color: #0a3c33;
  font-weight: 700;
}
.menus .context:nth-last-child(3) {
  margin-left: 7px;
}
.menus > .share {
  gap: 8px;
  width: 78px;
  height: 24px;
  margin: 4px 2px 0 auto;
  padding: 0;
  border-radius: 3px;
  background: #117865;
  color: #fff;
  font-size: 12px;
}
.groups {
  display: flex;
  height: 94px;
  padding-top: 4px;
}
.group {
  display: flex;
  flex-direction: column;
  height: 88px;
  padding: 6px 10px 0;
  border-right: 1px solid #d2d0ce;
}
.group p {
  margin-top: 4px;
  font-size: 10px;
  line-height: 12px;
  text-align: center;
}
.tools {
  display: flex;
  flex: none;
  gap: 4px;
  height: 67px;
}
.tool {
  flex-direction: column;
  justify-content: flex-start;
  min-width: 36px;
  line-height: 17px;
}
.tool > svg:first-child {
  margin-bottom: 1px;
}
.tool .latin {
  font-size: 11px;
}
.off {
  color: #c8c6c4;
}
.drop {
  margin-top: 6px;
  color: #3b3a39;
}
.off .drop {
  color: #c8c6c4;
}
.clipboard {
  width: 119px;
}
.clipboard .stack {
  display: flex;
  flex-direction: column;
  align-items: flex-start;
  gap: 8px;
  margin: -1px 0 0 1px;
}
.clipboard .stack button {
  gap: 5px;
  height: 16px;
}
.collapse {
  align-self: flex-end;
  margin: 0 0 8px auto;
}

/* Work area */
.work {
  display: flex;
  flex: 1;
  min-height: 0;
}
.rail {
  display: flex;
  flex-direction: column;
  flex: none;
  width: 41px;
  border-right: 1px solid #d2d0ce;
}
.rail button {
  width: 40px;
  height: 40px;
}
.rail .on {
  border-left: 3px solid #117865;
  padding-right: 3px;
}
.center {
  display: flex;
  flex-direction: column;
  flex: 1;
  min-width: 0;
}
.stage {
  display: flex;
  flex: 1;
  min-height: 0;
  background: #fff;
}
.canvas {
  display: flex;
  flex: 1;
  min-width: 0;
  padding: 0 18px 6px;
}
.page {
  position: relative;
  flex: 1;
  border: 2px dotted #605e5c;
  border-top: 0;
}
.visual {
  position: absolute;
  left: 11px;
  width: 455px;
}
.visual.first {
  top: 2px;
}
.visual.second {
  top: 327px;
  height: 316px;
  border: 1px solid #a19f9d;
  padding-top: 1px;
}
.visual h2 {
  padding-left: 6px;
  font-family: "Noto Sans CJK SC", sans-serif;
  font-size: 21px;
  line-height: 26px;
  white-space: nowrap;
}
.second h2 {
  padding-left: 5px;
}
.visual-tools {
  position: absolute;
  top: 5px;
  right: 4px;
  display: flex;
  gap: 12px;
}
.legend {
  display: flex;
  gap: 6px;
  padding: 6px 0 0 6px;
  color: #605e5c;
  font-size: 15px;
  line-height: 20px;
  white-space: nowrap;
}
.second .legend {
  gap: 8px;
  padding-left: 5px;
}
.legend li {
  display: flex;
  align-items: center;
  gap: 2px;
}
.legend .caption {
  margin-right: 5px;
  font-weight: 700;
}
.plot {
  display: block;
}
.tick {
  fill: #605e5c;
  font-size: 13px;
}
.value {
  fill: #fff;
  font-size: 13px;
}
.axis-title {
  fill: #252423;
  font-size: 18px;
}
.grip {
  position: absolute;
  border: 0 solid #979593;
}
.grip.nw, .grip.ne, .grip.sw, .grip.se {
  width: 10px;
  height: 10px;
}
.grip.nw { left: -2px; top: -2px; border-width: 4px 0 0 4px; }
.grip.ne { right: -2px; top: -2px; border-width: 2px 2px 0 0; }
.grip.sw { left: -2px; bottom: -2px; border-width: 0 0 4px 4px; }
.grip.se { right: -2px; bottom: -2px; border-width: 0 4px 4px 0; }
.grip.n, .grip.s { left: 50%; width: 12px; margin-left: -6px; border-top-width: 4px; }
.grip.n { top: -2px; }
.grip.s { bottom: -2px; }
.grip.w, .grip.e { top: 50%; height: 12px; margin-top: -6px; border-left-width: 4px; }
.grip.w { left: -2px; }
.grip.e { right: -2px; }
.mark {
  position: absolute;
  z-index: 2;
  border: 2px solid #ed1c24;
  pointer-events: none;
}
.visual .mark {
  inset: -5px -11px -10px -7px;
}
.filters {
  display: flex;
  flex-direction: column;
  align-items: center;
  flex: none;
  width: 33px;
  padding-top: 12px;
  gap: 9px;
  border-left: 1px solid #a19f9d;
}
.filters > svg {
  margin-top: 7px;
}
.filters h2 {
  font-size: 16px;
  line-height: 20px;
  font-weight: 700;
  writing-mode: vertical-rl;
  text-orientation: sideways;
}

/* Page tabs */
.pages {
  display: flex;
  align-items: center;
  flex: none;
  height: 35px;
}
.device {
  width: 24px;
  height: 31px;
  margin-left: 10px;
  padding-bottom: 4px;
  border-bottom: 3px solid transparent;
}
.device.on {
  border-bottom-color: #117865;
}
.device + .device {
  margin: 0 8px 0 20px;
}
.steps {
  display: flex;
  gap: 4px;
}
.steps button {
  width: 18px;
}
.page-tabs {
  display: flex;
  align-self: stretch;
  margin-left: 1px;
  border-left: 1px solid #979593;
  background: #fff;
}
.page-tabs button {
  padding: 0 20px;
  border-right: 1px solid #c8c6c4;
}
.page-tabs .on {
  box-shadow: inset 0 -4px #117865;
}
.add {
  width: 39px;
  height: 32px;
  background: #117865;
}

/* Side panes */
.pane {
  flex: none;
  border-left: 1px solid #d2d0ce;
}
.pane header {
  display: flex;
  align-items: center;
  justify-content: space-between;
  height: 38px;
  padding: 0 8px;
}
.pane header h2 {
  font-size: 16px;
  line-height: 22px;
  font-weight: 700;
}
.build {
  position: relative;
  z-index: 1;
  width: 181px;
}
.build h3 {
  padding-left: 8px;
  font-weight: 700;
}
.modes {
  display: flex;
  gap: 34px;
  height: 47px;
  padding: 3px 0 0 8px;
  border-bottom: 1px solid #8a8886;
}
.modes button {
  width: 32px;
  height: 32px;
  border-radius: 3px;
}
.modes .on {
  background: #d2d0ce;
}
.notch {
  display: block;
  margin: -9px 0 0 16px;
  position: relative;
}
.gallery {
  display: grid;
  grid-template-columns: repeat(6, 28px);
  grid-auto-rows: 28px;
  place-items: center;
  padding: 7px 0 4px 6px;
  border-bottom: 1px solid #d2d0ce;
}
.gallery button {
  position: relative;
  width: 24px;
  height: 24px;
}
.gallery .on {
  border: 1px solid #605e5c;
  background: #e1dfdd;
}
.gallery .on::after {
  content: "";
  position: absolute;
  inset: -8px -5px -3px -12px;
  border: 2px solid #ed1c24;
}
.wells {
  padding: 7px 6px 0 4px;
}
.well {
  position: relative;
  margin-bottom: 9px;
}
.well h4, .drill h4 {
  padding: 0 0 3px 8px;
  line-height: 20px;
}
.drill h4 {
  font-weight: 700;
}
.slot {
  height: 28px;
  padding-left: 10px;
  border: 1px dashed #b3b0ad;
  background: #fff;
  line-height: 26px;
}
.slot.filled {
  height: 37px;
  padding: 3px 2px;
}
.pill {
  display: flex;
  align-items: center;
  gap: 6px;
  height: 23px;
  padding: 0 4px;
  border: 1px solid #b3b0ad;
  border-radius: 2px;
  background: #edebe9;
}
.pill span {
  flex: 1;
}
.mark.a { inset: -1px -10px 4px -28px; }
.mark.b { inset: -4px -8px 6px -19px; }
.mark.c { inset: -8px -6px -3px -20px; }
.drill label {
  display: flex;
  align-items: center;
  justify-content: space-between;
  height: 26px;
  padding: 0 16px 0 8px;
}
.drill .slot {
  height: 26px;
  margin-top: 5px;
  padding-left: 8px;
  line-height: 24px;
}
.drill input {
  position: relative;
  width: 32px;
  height: 16px;
  margin: 0;
  border: 1px solid #605e5c;
  border-radius: 8px;
  background: #fff;
  appearance: none;
}
.drill input::after {
  content: "";
  position: absolute;
  left: 4px;
  top: 3px;
  width: 8px;
  height: 8px;
  border-radius: 4px;
  background: #605e5c;
}
.drill input:checked {
  border-color: #117865;
  background: #117865;
}
.drill input:checked::after {
  left: 18px;
  background: #fff;
}
.drill input:checked::before {
  content: "";
  position: absolute;
  left: 6px;
  top: 4px;
  width: 7px;
  height: 3px;
  border: solid #fff;
  border-width: 0 0 2px 2px;
  transform: rotate(-45deg);
}

/* Data pane */
.data {
  display: flex;
  flex-direction: column;
  width: 177px;
}
.data header {
  flex: none;
  padding-right: 4px;
}
.search {
  display: flex;
  align-items: center;
  flex: none;
  gap: 6px;
  height: 28px;
  margin: 7px 0 7px 4px;
  padding-left: 8px;
  border: 1px solid #605e5c;
  border-radius: 2px;
}
.search input {
  flex: 1;
  min-width: 0;
  padding: 0;
  border: 0;
  background: none;
  font: inherit;
  font-size: 14px;
}
.search input::placeholder {
  color: #605e5c;
}
.tree {
  display: flex;
  flex: 1;
  min-height: 0;
}
.tree ul {
  flex: 1;
  padding-top: 2px;
}
.tree li {
  display: flex;
  align-items: center;
  height: 24px;
  color: #3b3a39;
}
.table-row {
  gap: 4px;
  padding-left: 7px;
  font-size: 11px;
}
.table-icon {
  position: relative;
  width: 14px;
  height: 12px;
}
.table-icon svg {
  display: block;
}
.table-icon .used {
  position: absolute;
  left: 7px;
  top: 7px;
}
.field-row {
  gap: 6px;
  padding-left: 25px;
}
.field-row label {
  display: flex;
  align-items: center;
  gap: 6px;
}
.field-row input {
  position: relative;
  width: 12px;
  height: 12px;
  margin: 0;
  border: 1px solid #797775;
  border-radius: 2px;
  appearance: none;
}
.field-row input:checked {
  background: #117865;
}
.field-row input:checked::after {
  content: "";
  position: absolute;
  left: 1px;
  top: 1px;
  width: 8px;
  height: 4px;
  border: solid #fff;
  border-width: 0 0 1px 1px;
  transform: rotate(-45deg);
}
.thumb {
  width: 8px;
  height: 81%;
  background: #c8c6c4;
}

/* Status bar */
.status {
  display: flex;
  justify-content: space-between;
  flex: none;
  height: 19px;
  padding: 0 14px 0 4px;
  border-top: 1px solid #d2d0ce;
  color: #484644;
  line-height: 22px;
}
.zoom {
  display: flex;
  align-items: center;
  height: 22px;
  color: #605e5c;
}
.zoom input {
  width: 100px;
  height: 12px;
  margin: 0 7px 0 5px;
  background: linear-gradient(#605e5c, #605e5c) center / 100% 1px no-repeat;
  appearance: none;
}
.zoom input::-webkit-slider-thumb {
  width: 5px;
  height: 11px;
  background: #605e5c;
  appearance: none;
}
.zoom span {
  margin: 0 12px 0 14px;
}
</style>
